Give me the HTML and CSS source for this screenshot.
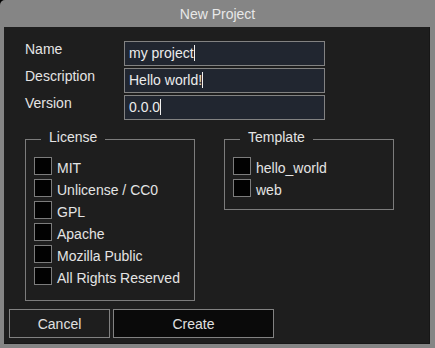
FILE: index.html
```html
<!DOCTYPE html>
<html lang="en">
<head>
    <meta charset="UTF-8">
    <meta name="viewport" content="width=device-width, initial-scale=1.0">
    <title>New Project</title>
    <link rel="stylesheet" href="styles.css">
</head>
<body>
    <div class="window">
        <div class="title">New Project</div>

        <div class="panel">
            <div class="form">
                <div class="fields">
                    <div class="field-label">Name</div>
                    <div class="text-input">my project<span class="caret"></span></div>
                    <div class="field-label">Description</div>
                    <div class="text-input">Hello world!<span class="caret"></span></div>
                    <div class="field-label">Version</div>
                    <div class="text-input">0.0.0<span class="caret"></span></div>
                </div>

                <div class="groups">
                    <fieldset class="group license">
                        <legend>License</legend>
                        <label class="check"><span class="box"></span>MIT</label>
                        <label class="check"><span class="box"></span>Unlicense / CC0</label>
                        <label class="check"><span class="box"></span>GPL</label>
                        <label class="check"><span class="box"></span>Apache</label>
                        <label class="check"><span class="box"></span>Mozilla Public</label>
                        <label class="check"><span class="box"></span>All Rights Reserved</label>
                    </fieldset>

                    <fieldset class="group template">
                        <legend>Template</legend>
                        <label class="check"><span class="box"></span>hello_world</label>
                        <label class="check"><span class="box"></span>web</label>
                    </fieldset>
                </div>
            </div>

            <div class="actions">
                <button class="btn cancel">Cancel</button>
                <button class="btn create">Create</button>
            </div>
        </div>
    </div>
</body>
</html>
```

FILE: styles.css
```css
* {
    margin: 0;
    padding: 0;
    box-sizing: border-box;
}

body {
    font-family: 'Liberation Sans', Arial, sans-serif;
    font-size: 14px;
    background: #000;
    color: #e4e4e4;
}

.window {
    width: 435px;
    height: 348px;
    background: #858585;
    border-top-left-radius: 5px;
    display: flex;
    flex-direction: column;
}

.title {
    height: 27px;
    padding-top: 1px;
    line-height: 26px;
    text-align: center;
    color: #e8e8e8;
}

.panel {
    height: 317px;
    margin: 0 5px 0 4px;
    padding-top: 14px;
    background: #1e1e1e;
    border-right: 1px solid #171717;
    border-bottom: 1px solid #171717;
}

.form {
    padding-left: 21px;
}

.fields {
    display: grid;
    grid-template-columns: 99px 201px;
    grid-auto-rows: 25px;
    row-gap: 2px;
}

.field-label {
    line-height: 16px;
}

.text-input {
    background: #212630;
    border: 1px solid #828282;
    padding-left: 4px;
    line-height: 23px;
    color: #ececec;
    white-space: nowrap;
}

.caret {
    display: inline-block;
    width: 1px;
    height: 16px;
    background: #f0f0f0;
    vertical-align: -3px;
}

.groups {
    display: flex;
    align-items: flex-start;
    gap: 29px;
    margin-top: 11px;
}

.group {
    width: 170px;
    min-width: 0;
    border: 1px solid #7c7c7c;
    padding: 9px 8px 11px 8px;
}

.group.template {
    padding-bottom: 8px;
}

.group legend {
    margin-left: 7px;
    padding: 0 8px 5px 8px;
    line-height: 12px;
}

.check {
    display: flex;
    align-items: flex-start;
    gap: 5px;
    height: 22px;
    line-height: 22px;
    white-space: nowrap;
}

.box {
    width: 18px;
    height: 18px;
    background: #020202;
    border: 1px solid #7c7c7c;
}

.actions {
    display: flex;
    gap: 3px;
    margin-top: 8px;
    padding-left: 5px;
}

.btn {
    height: 29px;
    font-family: inherit;
    font-size: 14px;
    color: #e0e0e0;
    border: 1px solid #828282;
    background: #1e1e1e;
}

.btn.cancel { width: 101px; }

.btn.create {
    width: 161px;
    background: #0a0a0a;
}
```
